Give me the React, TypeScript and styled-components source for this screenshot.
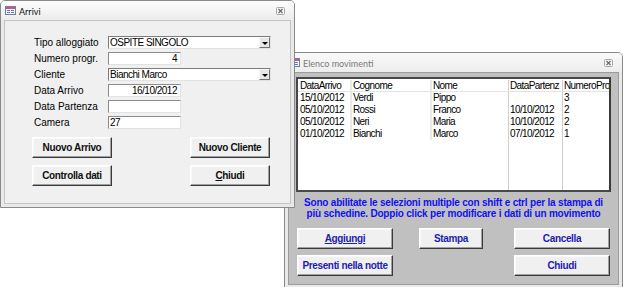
import React from "react";
import styled, { createGlobalStyle } from "styled-components";

const Global = createGlobalStyle`
  html, body { margin: 0; padding: 0; background: #ffffff; }
  body { font-family: "Liberation Sans", Arial, sans-serif; }
`;

const Desktop = styled.div`
  position: relative;
  width: 623px;
  height: 287px;
  overflow: hidden;
  background: #ffffff;
`;

const Window = styled.div<{ $x: number; $y: number; $w: number; $h: number; $z: number }>`
  position: absolute;
  left: ${(p) => p.$x}px;
  top: ${(p) => p.$y}px;
  width: ${(p) => p.$w}px;
  height: ${(p) => p.$h}px;
  z-index: ${(p) => p.$z};
  box-sizing: border-box;
  border: 1px solid #8a8a8a;
  border-radius: 5px 5px 0 0;
  background: #e9e9e9;
  display: flex;
  flex-direction: column;
`;

const TitleBar = styled.div<{ $active: boolean }>`
  height: 19px;
  flex: none;
  display: flex;
  align-items: center;
  gap: 3px;
  padding: 0 9px 0 4px;
  border-radius: 4px 4px 0 0;
  background: ${(p) =>
    p.$active
      ? "linear-gradient(#fdfdfd, #ececec)"
      : "linear-gradient(#f9f9f9, #eeeeee)"};
`;

const TitleText = styled.span<{ $active: boolean }>`
  font-family: Lato, "Liberation Sans", sans-serif;
  font-size: 9px;
  color: ${(p) => (p.$active ? "#101010" : "#7a7a7a")};
  flex: 1;
  padding-top: 1px;
`;

const Frame = styled.div`
  flex: 1;
  display: flex;
  padding: 0 3px 3px;
  min-height: 0;
`;

const Body = styled.div<{ $bg: string; $line: string }>`
  flex: 1;
  box-sizing: border-box;
  border: 1px solid ${(p) => p.$line};
  background: ${(p) => p.$bg};
  display: flex;
  flex-direction: column;
  min-height: 0;
`;

/* ---------- Arrivi form ---------- */

const ArriviContent = styled.div`
  padding: 15px 0 0 28px;
  display: flex;
  flex-direction: column;
`;

const FieldGrid = styled.div`
  display: grid;
  grid-template-columns: 75px auto;
  grid-auto-rows: 13px;
  row-gap: 3px;
  align-items: center;
`;

const Label = styled.span`
  font-size: 10px;
  color: #000;
  padding-left: 1px;
  white-space: nowrap;
`;

const TextBox = styled.div<{ $w: number; $align: "left" | "right" }>`
  width: ${(p) => p.$w}px;
  height: 13px;
  box-sizing: border-box;
  background: #fff;
  border: 1px solid;
  border-color: #8c8c8c #e2e2e2 #e2e2e2 #8c8c8c;
  font-size: 10px;
  letter-spacing: -0.5px;
  line-height: 11px;
  padding: 0 3px 0 1px;
  text-align: ${(p) => p.$align};
  white-space: nowrap;
  overflow: hidden;
`;

const Combo = styled.div`
  width: 163px;
  height: 13px;
  box-sizing: border-box;
  background: #fff;
  border: 1px solid;
  border-color: #7c7c7c #e2e2e2 #e2e2e2 #7c7c7c;
  display: flex;
  align-items: stretch;
`;

const ComboText = styled.span`
  flex: 1;
  font-size: 10px;
  letter-spacing: -0.5px;
  line-height: 11px;
  padding-left: 1px;
  white-space: nowrap;
  overflow: hidden;
`;

const ComboArrow = styled.span`
  width: 11px;
  box-sizing: border-box;
  background: #e6e6e6;
  border: 1px solid;
  border-color: #f8f8f8 #707070 #707070 #f8f8f8;
  display: flex;
  align-items: center;
  justify-content: center;
  &::before {
    content: "";
    border-left: 3px solid transparent;
    border-right: 3px solid transparent;
    border-top: 3px solid #000;
    margin-top: 1px;
  }
`;

const ArriviButtons = styled.div`
  display: grid;
  grid-template-columns: 80px 1fr 80px;
  row-gap: 7px;
  width: 238px;
  margin: 8px 0 0 -1px;
`;

const Button = styled.button<{ $tone: "black" | "blue"; $col?: number }>`
  grid-column: ${(p) => p.$col ?? "auto"};
  height: 21px;
  box-sizing: border-box;
  padding: 0;
  margin: 0;
  background: #f0f0f0;
  border: 1px solid;
  border-color: #ffffff #3a3a3a #3a3a3a #ffffff;
  box-shadow: inset -1px -1px 0 #a0a0a0, inset 1px 1px 0 #fafafa;
  font-family: "Liberation Sans", Arial, sans-serif;
  font-size: 10px;
  font-weight: bold;
  letter-spacing: -0.35px;
  color: ${(p) => (p.$tone === "blue" ? "#1c1cb4" : "#111111")};
  white-space: nowrap;
  cursor: default;
`;

const Under = styled.span`
  text-decoration: underline;
`;

/* ---------- Elenco movimenti ---------- */

const ElencoContent = styled.div`
  padding: 4px 7px 0 7px;
  display: flex;
  flex-direction: column;
`;

const ListBox = styled.div`
  height: 115px;
  box-sizing: border-box;
  border: 2px solid #484848;
  border-right-color: #3a3a3a;
  background: #fff;
  padding-top: 1px;
  display: grid;
  grid-template-columns: 52px 80px 78px 54px 1fr;
  grid-template-rows: 12px repeat(4, 12px) 1fr;
  overflow: hidden;
`;

const Cell = styled.div<{ $sep: "none" | "light" | "grey"; $head?: boolean }>`
  box-sizing: border-box;
  font-size: 10px;
  letter-spacing: -0.6px;
  color: #000;
  padding-left: ${(p) => (p.$sep === "none" ? 2 : 1)}px;
  white-space: nowrap;
  overflow: hidden;
  border-left: ${(p) =>
    p.$sep === "light" ? "2px solid #e9e9e9" : p.$sep === "grey" ? "1px solid #cfcfcf" : "none"};
  border-bottom: ${(p) => (p.$head ? "1px solid #e4e4e4" : "none")};
  line-height: ${(p) => (p.$head ? "11px" : "12px")};
`;

const Info = styled.p`
  margin: 5px 0 0;
  text-align: center;
  font-size: 10px;
  font-weight: bold;
  letter-spacing: -0.2px;
  line-height: 11px;
  color: #1010f5;
`;

const ElencoButtons = styled.div`
  display: grid;
  grid-template-columns: 96px 26px 64px 31px 96px;
  row-gap: 6px;
  margin: 9px 0 0 1px;
`;

/* ---------- Icons ---------- */

const FormIcon = () => (
  <svg width="11" height="9" viewBox="0 0 11 9">
    <rect x="0.5" y="0.5" width="10" height="8" fill="#f4f6fb" stroke="#6c7fa6" />
    <rect x="1" y="1" width="9" height="2" fill="#c9587a" />
    <rect x="2" y="4" width="3" height="1" fill="#5a7cc0" />
    <rect x="6" y="4" width="3" height="1" fill="#5a7cc0" />
    <rect x="2" y="6" width="3" height="1" fill="#5a7cc0" />
    <rect x="6" y="6" width="3" height="1" fill="#5a7cc0" />
  </svg>
);

const CloseIcon = () => (
  <svg width="9" height="8" viewBox="0 0 9 8">
    <rect x="0.5" y="0.5" width="8" height="7" rx="1" fill="#f4f4f4" stroke="#a8a8a8" />
    <path d="M2.5 2 L6.5 6 M6.5 2 L2.5 6" stroke="#6a6a6a" strokeWidth="1.2" />
  </svg>
);

/* ---------- Data ---------- */

type Field =
  | { label: string; kind: "combo"; value: string }
  | { label: string; kind: "text"; value: string; align: "left" | "right" };

const fields: Field[] = [
  { label: "Tipo alloggiato", kind: "combo", value: "OSPITE SINGOLO" },
  { label: "Numero progr.", kind: "text", value: "4", align: "right" },
  { label: "Cliente", kind: "combo", value: "Bianchi Marco" },
  { label: "Data Arrivo", kind: "text", value: "16/10/2012", align: "right" },
  { label: "Data Partenza", kind: "text", value: "", align: "left" },
  { label: "Camera", kind: "text", value: "27", align: "left" },
];

const headers = ["DataArrivo", "Cognome", "Nome", "DataPartenz", "NumeroPro"];
const rows = [
  ["15/10/2012", "Verdi", "Pippo", "", "3"],
  ["05/10/2012", "Rossi", "Franco", "10/10/2012", "2"],
  ["05/10/2012", "Neri", "Maria", "10/10/2012", "2"],
  ["01/10/2012", "Bianchi", "Marco", "07/10/2012", "1"],
];

const sepFor = (i: number): "none" | "light" | "grey" =>
  i === 0 ? "none" : i < 3 ? "light" : "grey";

export default function App() {
  return (
    <>
      <Global />
      <Desktop>
        <Window $x={0} $y={0} $w={295} $h={208} $z={2}>
          <TitleBar $active>
            <FormIcon />
            <TitleText $active>Arrivi</TitleText>
            <CloseIcon />
          </TitleBar>
          <Frame>
            <Body $bg="#f0f0f0" $line="#c4c4c4">
              <ArriviContent>
                <FieldGrid>
                  {fields.map((f) => (
                    <React.Fragment key={f.label}>
                      <Label>{f.label}</Label>
                      {f.kind === "combo" ? (
                        <Combo>
                          <ComboText>{f.value}</ComboText>
                          <ComboArrow />
                        </Combo>
                      ) : (
                        <TextBox $w={73} $align={f.align}>
                          {f.value}
                        </TextBox>
                      )}
                    </React.Fragment>
                  ))}
                </FieldGrid>
                <ArriviButtons>
                  <Button $tone="black" $col={1}>Nuovo Arrivo</Button>
                  <Button $tone="black" $col={3}>Nuovo Cliente</Button>
                  <Button $tone="black" $col={1}>Controlla dati</Button>
                  <Button $tone="black" $col={3}>
                    <Under>C</Under>hiudi
                  </Button>
                </ArriviButtons>
              </ArriviContent>
            </Body>
          </Frame>
        </Window>

        <Window $x={284} $y={52} $w={339} $h={237} $z={1}>
          <TitleBar $active={false}>
            <FormIcon />
            <TitleText $active={false}>Elenco movimenti</TitleText>
            <CloseIcon />
          </TitleBar>
          <Frame>
            <Body $bg="#c0c0c0" $line="#9c9c9c">
              <ElencoContent>
                <ListBox>
                  {headers.map((h, i) => (
                    <Cell key={h} $sep={sepFor(i)} $head>
                      {h}
                    </Cell>
                  ))}
                  {rows.map((r, ri) =>
                    r.map((v, i) => (
                      <Cell key={`${ri}-${i}`} $sep={sepFor(i)}>
                        {v}
                      </Cell>
                    ))
                  )}
                  {headers.map((h, i) => (
                    <Cell key={`fill-${h}`} $sep={i >= 3 ? "grey" : "none"} />
                  ))}
                </ListBox>
                <Info>
                  Sono abilitate le selezioni multiple con shift e ctrl per la stampa di
                  <br />
                  più schedine. Doppio click per modificare i dati di un movimento
                </Info>
                <ElencoButtons>
                  <Button $tone="blue" $col={1}>
                    <Under>Aggiungi</Under>
                  </Button>
                  <Button $tone="blue" $col={3}>Stampa</Button>
                  <Button $tone="blue" $col={5}>Cancella</Button>
                  <Button $tone="blue" $col={1}>Presenti nella notte</Button>
                  <Button $tone="blue" $col={5}>Chiudi</Button>
                </ElencoButtons>
              </ElencoContent>
            </Body>
          </Frame>
        </Window>
      </Desktop>
    </>
  );
}
